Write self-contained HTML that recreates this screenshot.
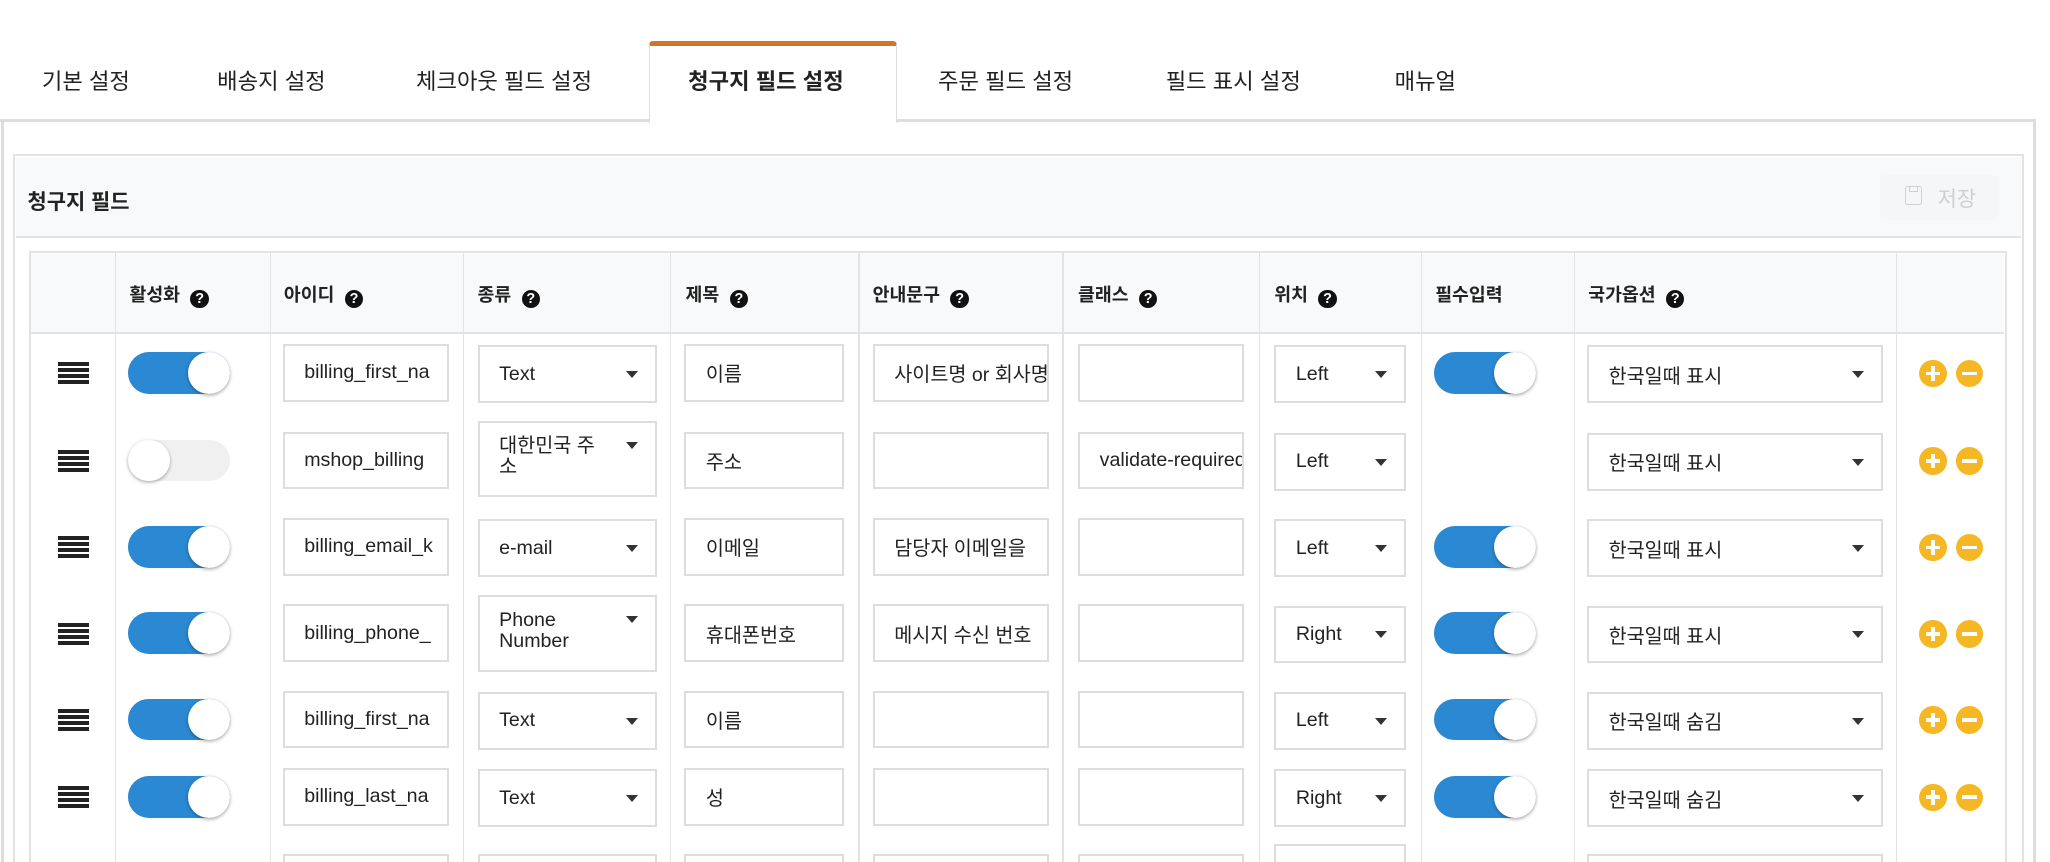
<!DOCTYPE html>
<html><head><meta charset="utf-8">
<style>
*{box-sizing:border-box;margin:0;padding:0}
html,body{width:2050px;height:862px;overflow:hidden;background:#fff}
#p{zoom:1.3083;position:relative;width:1567px;height:659px;overflow:hidden;font-family:"Liberation Sans","Noto Sans CJK KR",sans-serif;color:#222}
.a{position:absolute}
.tab{position:absolute;top:49px;font-size:17px;color:#222;white-space:nowrap}
.vl{position:absolute;top:192px;width:1px;height:470px;background:#e3e3e3}
.th{position:absolute;top:215px;font-size:14px;font-weight:bold;white-space:nowrap}
.q{display:inline-block;width:14px;height:14px;border-radius:50%;background:#111;color:#fff;font-size:11px;line-height:14px;text-align:center;font-weight:bold;vertical-align:-1px;margin-left:8px}
.in{position:absolute;height:44px;border:2px solid #ddd;background:#fff;font-size:15px;padding-left:15px;overflow:hidden;white-space:nowrap;display:flex;align-items:center}
.sel:after{content:"";position:absolute;right:13px;top:18px;border-left:5px solid transparent;border-right:5px solid transparent;border-top:6px solid #333}
.sel2{line-height:16px;white-space:normal;padding-right:40px;align-items:flex-start;padding-top:10px}
.sel2:after{top:14px}
.tg{position:absolute;width:78px;height:32px;border-radius:16px;background:#2b88d2}
.tg:after{content:"";position:absolute;right:0;top:0;width:32px;height:32px;border-radius:50%;background:#fff;box-shadow:0 1px 3px rgba(0,0,0,.35)}
.tg.off{background:#f0f0f0}
.tg.off:after{left:0;right:auto}
.hd{position:absolute;left:44px;width:24px;height:17px;background:repeating-linear-gradient(#222 0 3px,transparent 3px 4.6px)}
.bt{position:absolute;width:21px;height:21px;border-radius:50%;background:#f5b824}
.bt:before{content:"";position:absolute;left:5px;top:9px;width:11px;height:3px;background:#fff}
.bt.pl:after{content:"";position:absolute;left:9px;top:5px;width:3px;height:11px;background:#fff}
</style></head><body><div id="p">
<div class="tab" style="left:32px">기본 설정</div>
<div class="tab" style="left:166px">배송지 설정</div>
<div class="tab" style="left:318px">체크아웃 필드 설정</div>
<div class="tab" style="left:717px">주문 필드 설정</div>
<div class="tab" style="left:891px">필드 표시 설정</div>
<div class="tab" style="left:1066px">매뉴얼</div>
<div class="a" style="left:0;top:91px;width:1556px;height:2px;background:#ddd"></div>
<div class="a" style="left:1px;top:92px;width:2px;height:570px;background:#ddd"></div>
<div class="a" style="left:1554px;top:92px;width:2px;height:570px;background:#ddd"></div>
<div class="a" style="left:496px;top:31px;width:190px;height:63px;background:#fff;border:1px solid #ddd;border-top:4px solid #d3742b;border-bottom:none;border-radius:3px 3px 0 0"></div>
<div class="tab" style="left:526px;font-weight:bold">청구지 필드 설정</div>
<div class="a" style="left:10px;top:118px;width:1537px;height:545px;border:2px solid #e3e3e3;border-bottom:none;background:#fff"></div>
<div class="a" style="left:12px;top:120px;width:1533px;height:62px;background:#f8f9fb;border-bottom:2px solid #e3e3e3"></div>
<div class="a" style="left:21px;top:142px;font-size:16px;font-weight:bold">청구지 필드</div>
<div class="a" style="left:1437px;top:134px;width:90px;height:34px;background:#f5f6f8;border-radius:3px"></div>
<div class="a" style="left:1456px;top:142px;width:13px;height:15px;border:1.5px solid #d0d0d0;border-radius:2px"></div>
<div class="a" style="left:1459px;top:142px;width:7px;height:5px;border:1.5px solid #d0d0d0;border-top:none"></div>
<div class="a" style="left:1481px;top:140px;font-size:16px;color:#cfcfcf">저장</div>
<div class="a" style="left:22px;top:192px;width:1512px;height:470px;border:2px solid #e3e3e3;border-bottom:none"></div>
<div class="a" style="left:24px;top:194px;width:1508px;height:61px;background:#f8f9fa;border-bottom:2px solid #e3e3e3"></div>
<div class="vl" style="left:88px"></div><div class="vl" style="left:206px"></div><div class="vl" style="left:354px"></div><div class="vl" style="left:512px"></div><div class="vl" style="left:656px"></div><div class="vl" style="left:812px"></div><div class="vl" style="left:962px"></div><div class="vl" style="left:1086px"></div><div class="vl" style="left:1203px"></div><div class="vl" style="left:1449px"></div>
<div class="th" style="left:99px">활성화<span class="q">?</span></div>
<div class="th" style="left:217px">아이디<span class="q">?</span></div>
<div class="th" style="left:365px">종류<span class="q">?</span></div>
<div class="th" style="left:524px">제목<span class="q">?</span></div>
<div class="th" style="left:667px">안내문구<span class="q">?</span></div>
<div class="th" style="left:824px">클래스<span class="q">?</span></div>
<div class="th" style="left:974px">위치<span class="q">?</span></div>
<div class="th" style="left:1097px">필수입력</div>
<div class="th" style="left:1214px">국가옵션<span class="q">?</span></div>

<div class="hd" style="top:277px"></div><div class="tg" style="left:98px;top:269px"></div>
<div class="in" style="left:216px;top:263px;width:127px">billing_first_na</div>
<div class="in sel" style="left:365px;top:264px;width:137px">Text</div>
<div class="in" style="left:523px;top:263px;width:122px">이름</div>
<div class="in" style="left:667px;top:263px;width:135px">사이트명 or 회사명</div>
<div class="in" style="left:824px;top:263px;width:127px"></div>
<div class="in sel" style="left:974px;top:264px;width:101px">Left</div>
<div class="tg" style="left:1096px;top:269px"></div>
<div class="in sel" style="left:1213px;top:264px;width:226px">한국일때 표시</div>
<div class="bt pl" style="left:1467px;top:275px"></div><div class="bt" style="left:1495px;top:275px"></div>

<div class="hd" style="top:344px"></div><div class="tg off" style="left:98px;top:336px"></div>
<div class="in" style="left:216px;top:330px;width:127px">mshop_billing</div>
<div class="in sel sel2" style="left:365px;top:322px;width:137px;height:58px">대한민국 주소</div>
<div class="in" style="left:523px;top:330px;width:122px">주소</div>
<div class="in" style="left:667px;top:330px;width:135px"></div>
<div class="in" style="left:824px;top:330px;width:127px">validate-required</div>
<div class="in sel" style="left:974px;top:331px;width:101px">Left</div>
<div class="in sel" style="left:1213px;top:331px;width:226px">한국일때 표시</div>
<div class="bt pl" style="left:1467px;top:342px"></div><div class="bt" style="left:1495px;top:342px"></div>

<div class="hd" style="top:410px"></div><div class="tg" style="left:98px;top:402px"></div>
<div class="in" style="left:216px;top:396px;width:127px">billing_email_k</div>
<div class="in sel" style="left:365px;top:397px;width:137px">e-mail</div>
<div class="in" style="left:523px;top:396px;width:122px">이메일</div>
<div class="in" style="left:667px;top:396px;width:135px">담당자 이메일을 </div>
<div class="in" style="left:824px;top:396px;width:127px"></div>
<div class="in sel" style="left:974px;top:397px;width:101px">Left</div>
<div class="tg" style="left:1096px;top:402px"></div>
<div class="in sel" style="left:1213px;top:397px;width:226px">한국일때 표시</div>
<div class="bt pl" style="left:1467px;top:408px"></div><div class="bt" style="left:1495px;top:408px"></div>

<div class="hd" style="top:476px"></div><div class="tg" style="left:98px;top:468px"></div>
<div class="in" style="left:216px;top:462px;width:127px">billing_phone_</div>
<div class="in sel sel2" style="left:365px;top:455px;width:137px;height:59px">Phone Number</div>
<div class="in" style="left:523px;top:462px;width:122px">휴대폰번호</div>
<div class="in" style="left:667px;top:462px;width:135px">메시지 수신 번호</div>
<div class="in" style="left:824px;top:462px;width:127px"></div>
<div class="in sel" style="left:974px;top:463px;width:101px">Right</div>
<div class="tg" style="left:1096px;top:468px"></div>
<div class="in sel" style="left:1213px;top:463px;width:226px">한국일때 표시</div>
<div class="bt pl" style="left:1467px;top:474px"></div><div class="bt" style="left:1495px;top:474px"></div>

<div class="hd" style="top:542px"></div><div class="tg" style="left:98px;top:534px"></div>
<div class="in" style="left:216px;top:528px;width:127px">billing_first_na</div>
<div class="in sel" style="left:365px;top:529px;width:137px">Text</div>
<div class="in" style="left:523px;top:528px;width:122px">이름</div>
<div class="in" style="left:667px;top:528px;width:135px"></div>
<div class="in" style="left:824px;top:528px;width:127px"></div>
<div class="in sel" style="left:974px;top:529px;width:101px">Left</div>
<div class="tg" style="left:1096px;top:534px"></div>
<div class="in sel" style="left:1213px;top:529px;width:226px">한국일때 숨김</div>
<div class="bt pl" style="left:1467px;top:540px"></div><div class="bt" style="left:1495px;top:540px"></div>

<div class="hd" style="top:601px"></div><div class="tg" style="left:98px;top:593px"></div>
<div class="in" style="left:216px;top:587px;width:127px">billing_last_na</div>
<div class="in sel" style="left:365px;top:588px;width:137px">Text</div>
<div class="in" style="left:523px;top:587px;width:122px">성</div>
<div class="in" style="left:667px;top:587px;width:135px"></div>
<div class="in" style="left:824px;top:587px;width:127px"></div>
<div class="in sel" style="left:974px;top:588px;width:101px">Right</div>
<div class="tg" style="left:1096px;top:593px"></div>
<div class="in sel" style="left:1213px;top:588px;width:226px">한국일때 숨김</div>
<div class="bt pl" style="left:1467px;top:599px"></div><div class="bt" style="left:1495px;top:599px"></div>

<div class="in" style="left:216px;top:653px;width:127px"></div>
<div class="in" style="left:365px;top:653px;width:137px"></div>
<div class="in" style="left:523px;top:653px;width:122px"></div>
<div class="in" style="left:667px;top:653px;width:135px"></div>
<div class="in" style="left:824px;top:653px;width:127px"></div>
<div class="in" style="left:974px;top:645px;width:101px"></div>
<div class="in" style="left:1213px;top:653px;width:226px"></div>
</div></body></html>
